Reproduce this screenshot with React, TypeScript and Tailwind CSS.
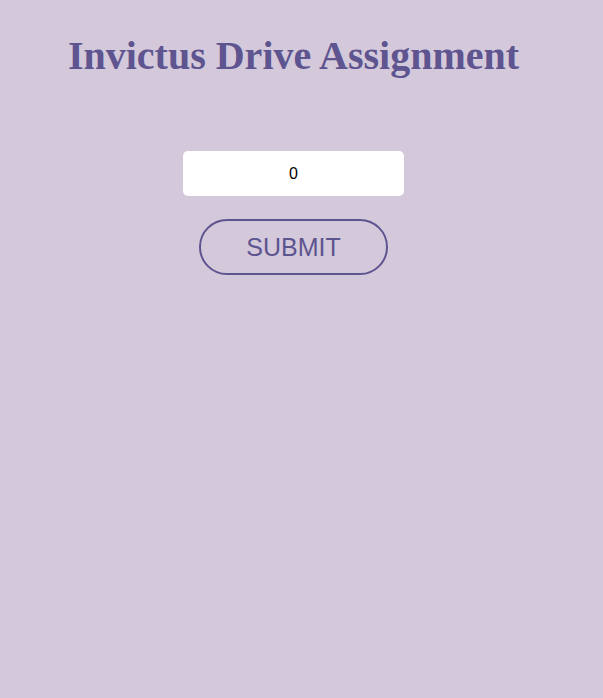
export default function App() {
  return (
    <div className="min-h-[698px] w-full bg-[#d4c9db]">
      <div className="flex w-[587px] flex-col items-center pt-[33px]">
        <h1 className="font-['Liberation_Serif',serif] text-[40px] font-bold leading-[46px] text-[#5e5490]">
          Invictus Drive Assignment
        </h1>
        <input
          type="text"
          defaultValue="0"
          className="mt-[72px] h-[45px] w-[221px] rounded-[5px] bg-white text-center font-['Liberation_Sans',sans-serif] text-base text-black outline-none"
        />
        <button className="mt-[23px] h-[56px] w-[189px] rounded-full border-2 border-[#5e5490] pt-[2px] font-['Liberation_Sans',sans-serif] text-[25px] text-[#5e5490]">
          SUBMIT
        </button>
      </div>
    </div>
  );
}
